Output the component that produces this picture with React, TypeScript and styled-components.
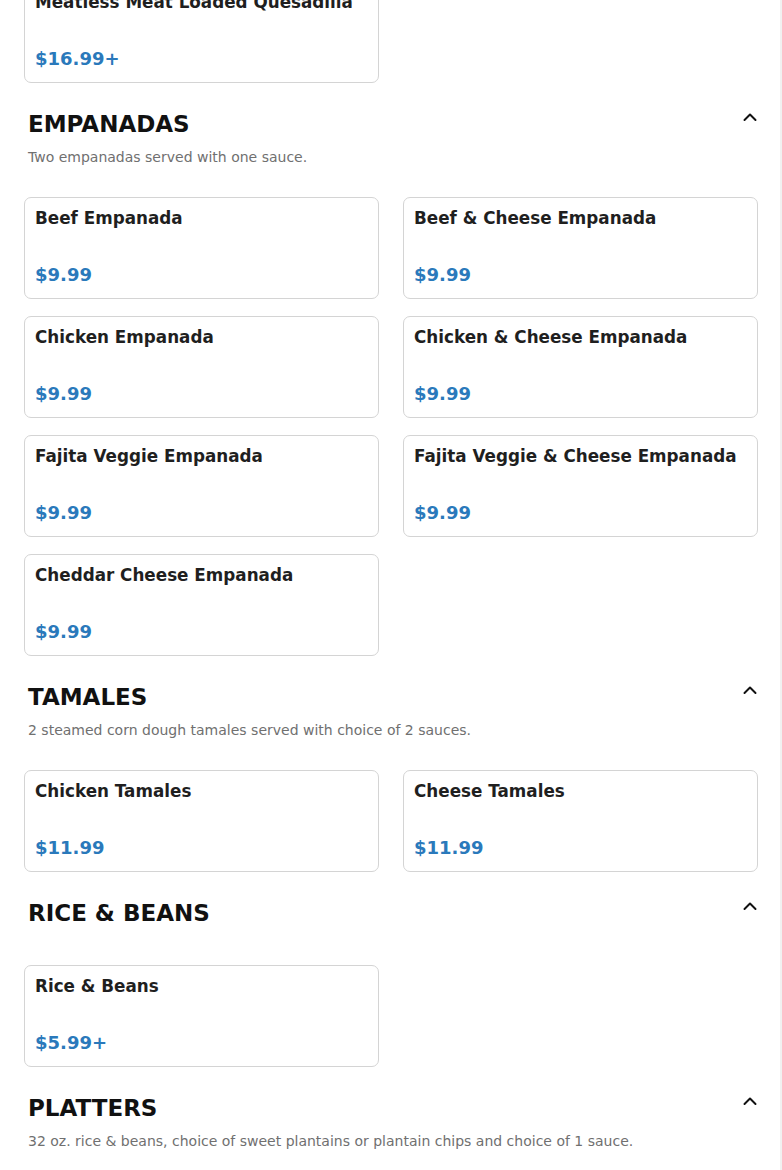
import React from 'react';
import styled, { createGlobalStyle } from 'styled-components';

interface Item {
  name: string;
  price: string;
}

interface Category {
  title: string;
  description?: string;
  items: Item[];
}

const GlobalStyle = createGlobalStyle`
  html, body {
    margin: 0;
    padding: 0;
    background: #f1f1f1;
  }

  body {
    font-family: "DejaVu Sans", "Noto Sans", sans-serif;
    color: #1c1c1c;
    overflow: hidden;
  }
`;

const Page = styled.main`
  width: 780px;
  min-height: 1170px;
  box-sizing: border-box;
  background: #ffffff;
  padding: 0 22px 0 24px;
  overflow: hidden;
`;

// the menu is scrolled: the previous card is cut at the top
const Scroller = styled.div`
  margin-top: -19px;
`;

const Section = styled.section`
  margin-top: 27px;

  &:first-child {
    margin-top: 0;
  }
`;

const HeaderRow = styled.div`
  display: flex;
  align-items: flex-start;
  justify-content: space-between;
  padding: 0 1px 0 4px;
`;

const Heading = styled.h2`
  margin: 0;
  font-size: 23px;
  line-height: 28px;
  font-weight: 700;
  color: #111111;
`;

const Toggle = styled.button`
  display: flex;
  align-items: center;
  justify-content: center;
  width: 14px;
  height: 14px;
  padding: 0;
  border: 0;
  background: none;
  color: #111111;
  cursor: pointer;
`;

const Description = styled.p`
  margin: 9px 0 0;
  padding: 0 4px;
  font-size: 14px;
  line-height: 20px;
  color: #707070;
`;

const Grid = styled.div<{ $offset: number }>`
  display: grid;
  grid-template-columns: repeat(2, 1fr);
  column-gap: 24px;
  row-gap: 17px;
  margin-top: ${(p) => p.$offset}px;
`;

const Card = styled.article`
  display: flex;
  flex-direction: column;
  justify-content: space-between;
  min-height: 102px;
  box-sizing: border-box;
  padding: 8px 10px 11px;
  border: 1px solid #d4d4d4;
  border-radius: 7px;
  background: #ffffff;
`;

const ItemName = styled.h3`
  margin: 0;
  font-size: 16.8px;
  line-height: 24px;
  font-weight: 700;
  color: #1f1f1f;
`;

const Price = styled.span`
  font-size: 18px;
  line-height: 24px;
  font-weight: 700;
  color: #2a79bb;
`;

const categories: Category[] = [
  {
    title: '',
    items: [{ name: 'Meatless Meat Loaded Quesadilla', price: '$16.99+' }]
  },
  {
    title: 'EMPANADAS',
    description: 'Two empanadas served with one sauce.',
    items: [
      { name: 'Beef Empanada', price: '$9.99' },
      { name: 'Beef & Cheese Empanada', price: '$9.99' },
      { name: 'Chicken Empanada', price: '$9.99' },
      { name: 'Chicken & Cheese Empanada', price: '$9.99' },
      { name: 'Fajita Veggie Empanada', price: '$9.99' },
      { name: 'Fajita Veggie & Cheese Empanada', price: '$9.99' },
      { name: 'Cheddar Cheese Empanada', price: '$9.99' }
    ]
  },
  {
    title: 'TAMALES',
    description: '2 steamed corn dough tamales served with choice of 2 sauces.',
    items: [
      { name: 'Chicken Tamales', price: '$11.99' },
      { name: 'Cheese Tamales', price: '$11.99' }
    ]
  },
  {
    title: 'RICE & BEANS',
    items: [{ name: 'Rice & Beans', price: '$5.99+' }]
  },
  {
    title: 'PLATTERS',
    description: '32 oz. rice & beans, choice of sweet plantains or plantain chips and choice of 1 sauce.',
    items: []
  }
];

function ChevronUp (): React.ReactElement {
  return (
    <svg width='14' height='14' viewBox='0 0 14 14' fill='none'>
      <polyline
        points='1.5,10 7,4.5 12.5,10'
        stroke='currentColor'
        strokeWidth='2'
        strokeLinecap='round'
        strokeLinejoin='round'
      />
    </svg>
  );
}

function MenuSection ({ category }: { category: Category }): React.ReactElement {
  return (
    <Section>
      {category.title && (
        <HeaderRow>
          <Heading>{category.title}</Heading>
          <Toggle aria-label='Collapse'>
            <ChevronUp />
          </Toggle>
        </HeaderRow>
      )}
      {category.description && <Description>{category.description}</Description>}
      {category.items.length > 0 && (
        <Grid $offset={!category.title ? 0 : category.description ? 30 : 38}>
          {category.items.map((item) => (
            <Card key={item.name}>
              <ItemName>{item.name}</ItemName>
              <Price>{item.price}</Price>
            </Card>
          ))}
        </Grid>
      )}
    </Section>
  );
}

export default function App (): React.ReactElement {
  return (
    <>
      <GlobalStyle />
      <Page>
        <Scroller>
          {categories.map((category, i) => (
            <MenuSection
              category={category}
              key={i}
            />
          ))}
        </Scroller>
      </Page>
    </>
  );
}
